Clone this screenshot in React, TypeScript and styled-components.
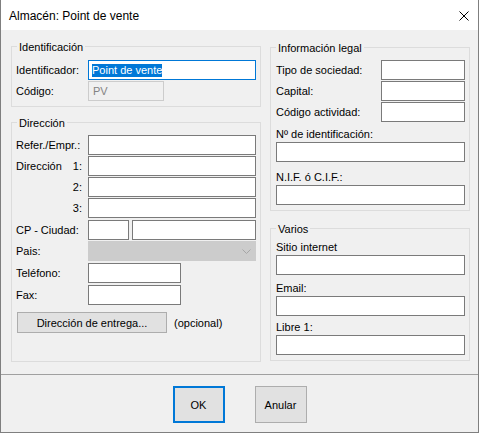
import React from 'react';
import styled, { createGlobalStyle } from 'styled-components';

const GlobalStyle = createGlobalStyle`
  html, body {
    margin: 0;
    padding: 0;
    background: #2b2b2b;
  }
  body {
    font-family: 'Liberation Sans', Arial, sans-serif;
    font-size: 11px;
    color: #000;
  }
  * {
    box-sizing: border-box;
  }
`;

const Window = styled.div`
    width: 479px;
    height: 433px;
    display: flex;
    flex-direction: column;
    border: 1px solid #7f7f7f;
    border-top: none;
    background: #f0f0f0;
`;

const TitleBar = styled.header`
    height: 30px;
    flex-shrink: 0;
    background: #fff;
    display: flex;
    align-items: center;
    justify-content: space-between;
    padding: 2px 9px 0 8px;
    font-size: 12px;
`;

const CloseIcon = styled.svg`
    width: 10px;
    height: 10px;
    margin-top: -1px;
`;

const Body = styled.main`
    height: 344px;
    flex-shrink: 0;
    display: flex;
    gap: 9px;
    padding: 16px 0 0 10px;
`;

const Column = styled.div<{ $w: number; $gap: number; $pt?: number }>`
    width: ${(p) => p.$w}px;
    display: flex;
    flex-direction: column;
    gap: ${(p) => p.$gap}px;
    padding-top: ${(p) => p.$pt ?? 0}px;
`;

const Group = styled.section<{ $pt: number; $pb: number; $pl?: number }>`
    position: relative;
    border: 1px solid #dcdcdc;
    padding: ${(p) => p.$pt}px 4px ${(p) => p.$pb}px ${(p) => p.$pl ?? 4}px;
    display: flex;
    flex-direction: column;
`;

const Legend = styled.span`
    position: absolute;
    top: -6px;
    left: 5px;
    padding: 0 2px;
    line-height: 13px;
    background: #f0f0f0;
`;

const Row = styled.div<{ $mt?: number }>`
    display: flex;
    align-items: center;
    height: 20px;
    margin-top: ${(p) => p.$mt ?? 0}px;
`;

const Label = styled.div<{ $w?: number; $justify?: string }>`
    width: ${(p) => (p.$w ? `${p.$w}px` : 'auto')};
    flex: ${(p) => (p.$w ? '0 0 auto' : '1')};
    display: flex;
    justify-content: ${(p) => p.$justify ?? 'flex-start'};
    padding-right: ${(p) => (p.$justify ? '6px' : '0')};
    line-height: 20px;
    white-space: nowrap;
`;

const StackLabel = styled.div<{ $mt: number }>`
    margin-top: ${(p) => p.$mt}px;
    margin-bottom: 1px;
    line-height: 13px;
    white-space: nowrap;
`;

const Input = styled.input<{ $w?: number }>`
    width: ${(p) => (p.$w ? `${p.$w}px` : '100%')};
    height: 20px;
    flex-shrink: 0;
    border: 1px solid #7a7a7a;
    background: #fff;
    padding: 0 3px;
    font: inherit;
    outline: none;
    margin: 0;
`;

const FocusedField = styled.div`
    width: 168px;
    height: 20px;
    border: 1px solid #0078d7;
    background: #fff;
    padding: 0 3px;
    display: flex;
    align-items: center;
`;

const Selection = styled.span`
    background: #0078d7;
    color: #fff;
    line-height: 13px;
`;

const DisabledField = styled.div<{ $w: number }>`
    width: ${(p) => p.$w}px;
    height: 20px;
    border: 1px solid #cccccc;
    background: #f0f0f0;
    color: #838383;
    padding: 0 4px;
    line-height: 18px;
`;

const SelectBox = styled.div`
    width: 168px;
    height: 20px;
    border: 1px solid #cccccc;
    background: #cccccc;
    display: flex;
    align-items: center;
    justify-content: flex-end;
    padding-right: 4px;
`;

const PushButton = styled.button<{ $w: number; $h: number; $default?: boolean }>`
    width: ${(p) => p.$w}px;
    height: ${(p) => p.$h}px;
    background: #e1e1e1;
    border: ${(p) => (p.$default ? '2px solid #0078d7' : '1px solid #adadad')};
    font: inherit;
    color: #000;
    padding: 0;
    margin: 0;
`;

const Note = styled.span`
    margin-left: 7px;
`;

const Separator = styled.hr`
    margin: 0;
    border: none;
    border-top: 1px solid #a0a0a0;
    height: 0;
`;

const Footer = styled.footer`
    flex: 1;
    display: flex;
    justify-content: center;
    align-items: flex-start;
    gap: 30px;
    padding-top: 11px;
`;

const App: React.FC = () => {
    return (
        <>
            <GlobalStyle />
            <Window>
                <TitleBar>
                    <span>Almacén: Point de vente</span>
                    <CloseIcon viewBox="0 0 10 10">
                        <path d="M0.5 0.5 L9.5 9.5 M9.5 0.5 L0.5 9.5" stroke="#000" strokeWidth="1" fill="none" />
                    </CloseIcon>
                </TitleBar>
                <Body>
                    <Column $w={250} $gap={15}>
                        <Group $pt={13} $pb={5}>
                            <Legend>Identificación</Legend>
                            <Row>
                                <Label $w={72}>Identificador:</Label>
                                <FocusedField>
                                    <Selection>Point de vente</Selection>
                                </FocusedField>
                            </Row>
                            <Row $mt={1}>
                                <Label $w={72}>Código:</Label>
                                <DisabledField $w={76}>PV</DisabledField>
                            </Row>
                        </Group>
                        <Group $pt={12} $pb={28}>
                            <Legend>Dirección</Legend>
                            <Row>
                                <Label $w={72}>Refer./Empr.:</Label>
                                <Input $w={168} readOnly />
                            </Row>
                            <Row $mt={1}>
                                <Label $w={72} $justify="space-between">
                                    <span>Dirección</span>
                                    <span>1:</span>
                                </Label>
                                <Input $w={168} readOnly />
                            </Row>
                            <Row $mt={1}>
                                <Label $w={72} $justify="flex-end">2:</Label>
                                <Input $w={168} readOnly />
                            </Row>
                            <Row $mt={1}>
                                <Label $w={72} $justify="flex-end">3:</Label>
                                <Input $w={168} readOnly />
                            </Row>
                            <Row $mt={2}>
                                <Label $w={72}>CP - Ciudad:</Label>
                                <Input $w={41} readOnly />
                                <Input $w={124} readOnly style={{ marginLeft: 3 }} />
                            </Row>
                            <Row $mt={1}>
                                <Label $w={72}>Pais:</Label>
                                <SelectBox>
                                    <svg width="9" height="5" viewBox="0 0 9 5">
                                        <path d="M0.5 0.5 L4.5 4.5 L8.5 0.5" stroke="#a6a6a6" strokeWidth="1" fill="none" />
                                    </svg>
                                </SelectBox>
                            </Row>
                            <Row $mt={2}>
                                <Label $w={72}>Teléfono:</Label>
                                <Input $w={93} readOnly />
                            </Row>
                            <Row $mt={2}>
                                <Label $w={72}>Fax:</Label>
                                <Input $w={93} readOnly />
                            </Row>
                            <Row $mt={7} style={{ height: 21, paddingLeft: 1 }}>
                                <PushButton $w={150} $h={21}>Dirección de entrega...</PushButton>
                                <Note>(opcional)</Note>
                            </Row>
                        </Group>
                    </Column>
                    <Column $w={200} $gap={17} $pt={1}>
                        <Group $pt={12} $pb={5} $pl={5}>
                            <Legend>Información legal</Legend>
                            <Row>
                                <Label>Tipo de sociedad:</Label>
                                <Input $w={84} readOnly />
                            </Row>
                            <Row $mt={1}>
                                <Label>Capital:</Label>
                                <Input $w={84} readOnly />
                            </Row>
                            <Row $mt={1}>
                                <Label>Código actividad:</Label>
                                <Input $w={84} readOnly />
                            </Row>
                            <StackLabel $mt={6}>Nº de identificación:</StackLabel>
                            <Input readOnly />
                            <StackLabel $mt={9}>N.I.F. ó C.I.F.:</StackLabel>
                            <Input readOnly />
                        </Group>
                        <Group $pt={12} $pb={5} $pl={5}>
                            <Legend>Varios</Legend>
                            <StackLabel $mt={0}>Sitio internet</StackLabel>
                            <Input readOnly />
                            <StackLabel $mt={7}>Email:</StackLabel>
                            <Input readOnly />
                            <StackLabel $mt={5}>Libre 1:</StackLabel>
                            <Input readOnly />
                        </Group>
                    </Column>
                </Body>
                <Separator />
                <Footer>
                    <PushButton $w={52} $h={37} $default>OK</PushButton>
                    <PushButton $w={52} $h={37}>Anular</PushButton>
                </Footer>
            </Window>
        </>
    );
};

export default App;
